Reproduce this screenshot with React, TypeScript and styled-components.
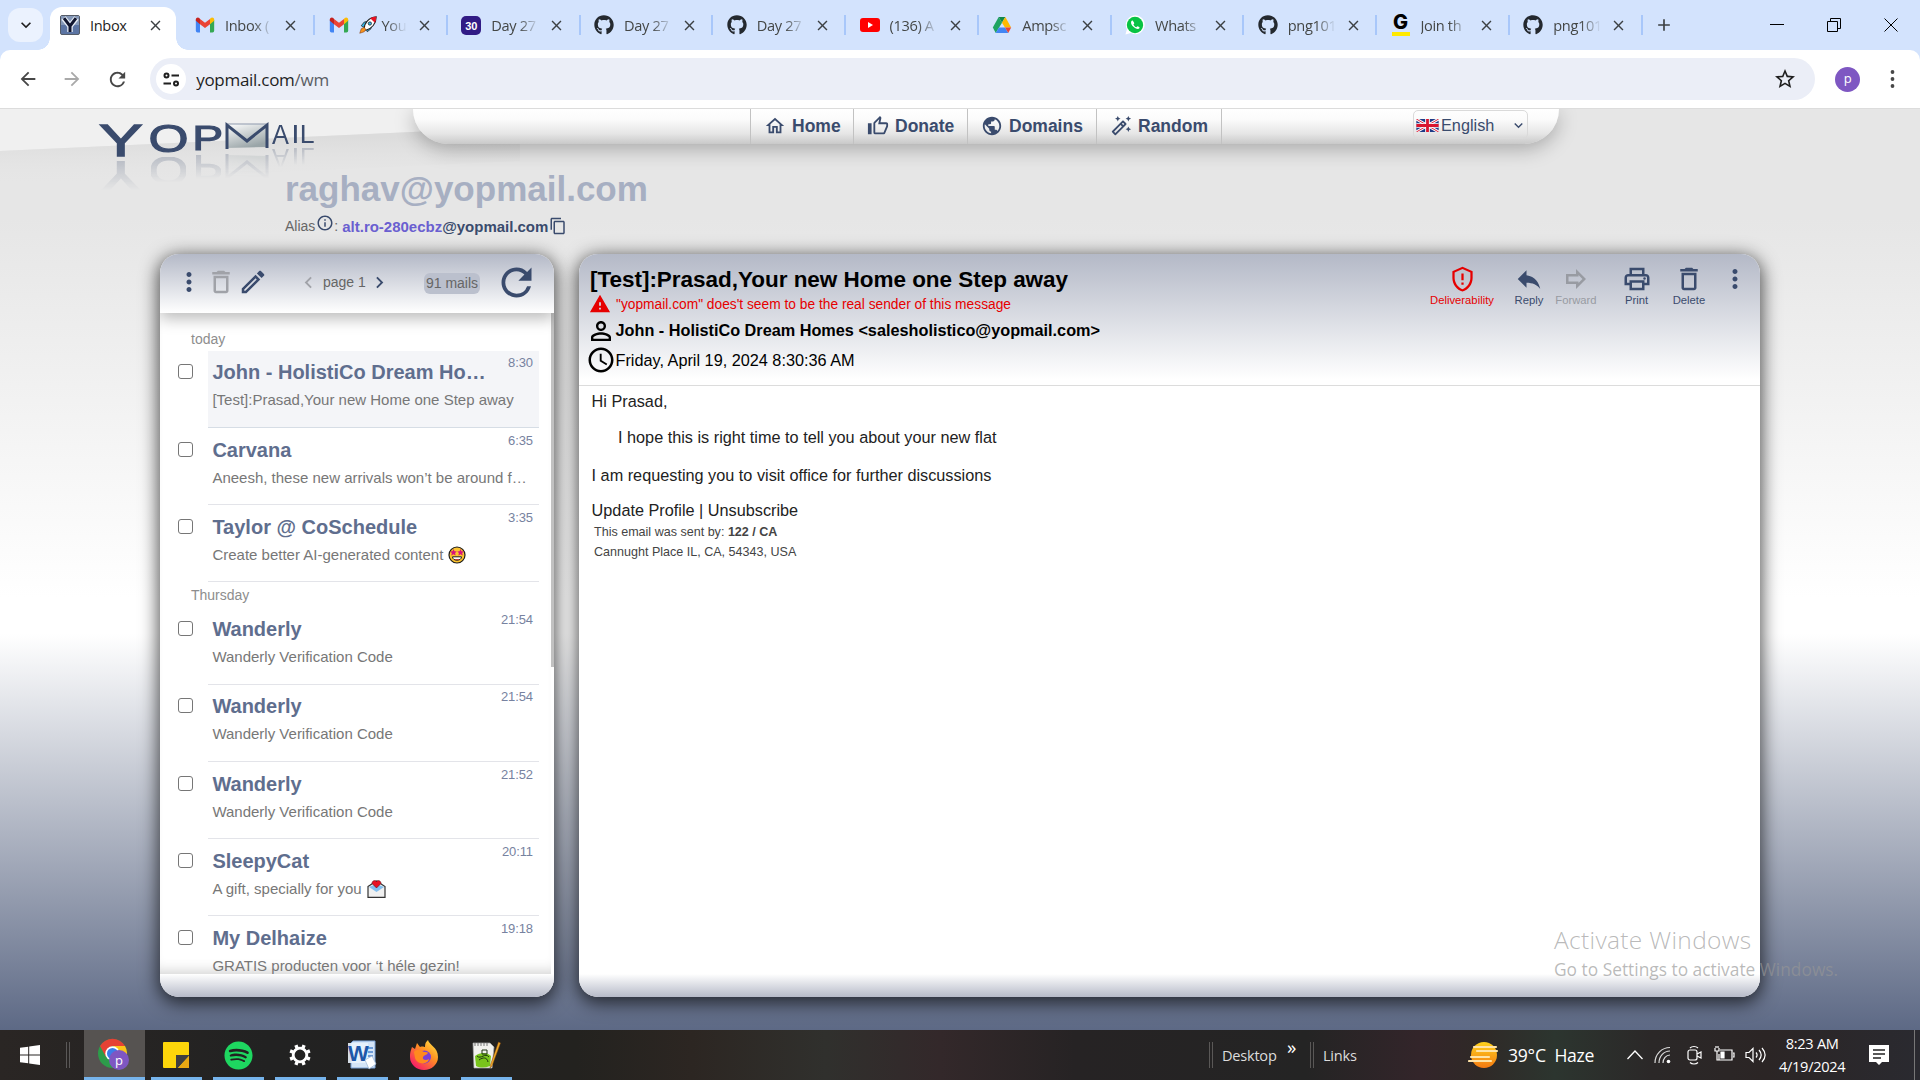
import React from 'react';
import styled, { createGlobalStyle } from 'styled-components';
import {
  MdArrowBack, MdArrowForward, MdRefresh, MdClose, MdAdd, MdStarOutline, MdMoreVert, MdDeleteOutline,
  MdOutlineEdit, MdChevronLeft, MdChevronRight, MdInfoOutline, MdContentCopy, MdPersonOutline,
  MdAccessTime, MdWarning, MdOutlinePrint, MdPublic, MdOutlineAutoFixHigh,
  MdKeyboardArrowDown,
} from 'react-icons/md';
import { FaGithub, FaSpotify } from 'react-icons/fa';

const navy = '#3a4b6d';
const ui = '"Open Sans", "Noto Sans", sans-serif';
const arial = '"Liberation Sans", Arial, sans-serif';

const Global = createGlobalStyle`
  html, body { margin: 0; padding: 0; overflow: hidden; }
  * { box-sizing: border-box; }
  svg { display: block; flex: none; }
`;

const Screen = styled.div`
  width: 1920px;
  height: 1080px;
  display: grid;
  grid-template-rows: 50px 58px 922px 50px;
  position: relative;
  overflow: hidden;
  background: #d3e3fd;
  font-family: ${arial};
`;

/* ---------- browser tabs ---------- */
const TabStrip = styled.div`
  display: flex;
  background: #d3e3fd;
  padding-left: 8px;
  font-family: ${ui};
`;
const TabSearch = styled.div`
  width: 35px;
  height: 34px;
  margin: 8px 7px 0 0;
  border-radius: 12px;
  background: #ebf2fe;
  display: grid;
  place-items: center;
  color: #1f1f1f;
`;
const Tab = styled.div<{ $active?: boolean; $first?: boolean }>`
  position: relative;
  display: flex;
  flex: none;
  align-items: center;
  width: ${p => (p.$active ? '126px' : p.$first ? '139px' : '132.75px')};
  height: ${p => (p.$active ? '43px' : '36px')};
  margin-top: 7px;
  padding: ${p => (p.$active ? '0 0 7px 10px' : p.$first ? '0 0 0 19px' : '0 0 0 13.5px')};
  background: ${p => (p.$active ? '#fff' : 'transparent')};
  border-radius: 12px 12px 0 0;
  &::before, &::after {
    content: '';
    display: ${p => (p.$active ? 'block' : 'none')};
    position: absolute;
    bottom: 0;
    width: 12px;
    height: 12px;
  }
  &::before { left: -12px; background: radial-gradient(circle at 0 0, transparent 11.5px, #fff 12px); }
  &::after { right: -12px; background: radial-gradient(circle at 100% 0, transparent 11.5px, #fff 12px); }
`;
const TabTitle = styled.span<{ $active?: boolean }>`
  display: flex;
  align-items: center;
  gap: 5px;
  width: 48px;
  margin-left: 10px;
  white-space: nowrap;
  font-size: 14.6px;
  letter-spacing: -0.35px;
  color: ${p => (p.$active ? '#1f1f1f' : '#444746')};
  mask-image: ${p => (p.$active ? 'none' : 'linear-gradient(90deg, #000 58%, transparent 100%)')};
`;
const TabClose = styled.span`
  margin-left: 9px;
  color: #3c4043;
`;
const TabDivider = styled.i`
  margin-left: auto;
  width: 2px;
  height: 20px;
  background: #a8c7fa;
`;
const NewTab = styled.div`
  width: 42px;
  display: grid;
  place-items: center;
  color: #3c4043;
`;
const WindowButtons = styled.div`
  margin-left: auto;
  display: flex;
  align-items: center;
  gap: 43px;
  padding-right: 22px;
`;

/* ---------- browser toolbar ---------- */
const Toolbar = styled.div`
  background: #fff;
  border-radius: 10px 10px 0 0;
  display: flex;
  align-items: center;
  padding-left: 17px;
  font-family: ${ui};
  color: #474747;
`;
const ToolButton = styled.span<{ $dim?: boolean }>`
  width: 44.4px;
  color: ${p => (p.$dim ? '#a9a9a9' : '#474747')};
`;
const UrlBar = styled.div`
  width: 1665px;
  height: 42px;
  border-radius: 21px;
  background: #ebeef7;
  display: flex;
  align-items: center;
  padding: 0 18px 0 6px;
  font-size: 17px;
  letter-spacing: -0.28px;
  color: #1f1f1f;
`;
const SiteInfo = styled.span`
  width: 30px;
  height: 30px;
  margin-right: 10px;
  border-radius: 50%;
  background: #fff;
  display: grid;
  place-items: center;
`;
const UrlPath = styled.span`color: #5a5d63;`;
const StarSlot = styled.span`margin-left: auto;`;
const Avatar = styled.span`
  width: 25px;
  height: 25px;
  margin: 0 30px 0 20px;
  border-radius: 50%;
  background: #7e57c2;
  color: #fff;
  font-size: 13px;
  line-height: 23px;
  text-align: center;
`;

/* ---------- page ---------- */
const Page = styled.main`
  position: relative;
  border-top: 1px solid #dcdcdc;
  background: linear-gradient(#e6e6e6 0, #e6e6e6 12%, #fff 53%, #fff 57%, #5d6985 100%);
`;
const Backdrop = styled.svg`
  position: absolute;
  left: 0;
  top: 0;
`;
const TopArea = styled.header`
  position: relative;
  height: 145px;
`;
const TopRow = styled.div`
  display: flex;
  align-items: flex-start;
  height: 60px;
`;
const Logo = styled.div`
  width: 413px;
  padding: 14px 0 0 101px;
  display: flex;
  align-items: flex-start;
`;
const LogoLetter = styled.svg<{ $gap: number; $top?: number }>`
  margin-left: ${p => p.$gap}px;
  margin-top: ${p => p.$top ?? 0}px;
  overflow: visible;
  -webkit-box-reflect: below 5px linear-gradient(transparent 5%, rgba(0, 0, 0, 0.24));
`;
const Nav = styled.nav`
  width: 1146px;
  height: 35px;
  display: flex;
  padding-left: 337px;
  border-radius: 0 0 35px 35px;
  background: linear-gradient(#fff 0, #fbfbfb 30%, #e6e6e6 70%, #c9c9c9 100%);
  box-shadow: 0 5px 20px rgba(0, 0, 0, 0.27);
  clip-path: inset(0 -40px -40px -40px);
`;
const NavItem = styled.a<{ $w: number; $last?: boolean }>`
  width: ${p => p.$w}px;
  display: flex;
  align-items: center;
  gap: 6px;
  padding: 0 0 1px 13px;
  border-left: 1px solid #c2c2c2;
  border-right: ${p => (p.$last ? '1px solid #c2c2c2' : 'none')};
  font-weight: bold;
  font-size: 17.5px;
  color: ${navy};
`;
const Language = styled.div`
  display: flex;
  align-items: center;
  width: 115px;
  height: 29px;
  margin: 1px 0 0 191px;
  padding: 1px 0 0 2px;
  border: 1px solid #dadada;
  border-radius: 5px;
  color: ${navy};
  font-size: 16.25px;
  gap: 2px;
  svg:last-child { margin-left: auto; }
`;
const Address = styled.h1`
  margin: 0 0 0 285px;
  font-size: 35px;
  line-height: 40px;
  color: #a7afc2;
`;
const AliasLine = styled.div`
  display: flex;
  align-items: center;
  margin-left: 285px;
  height: 34px;
  font-size: 14px;
  color: #666;
`;
const AliasIcon = styled.span<{ $up?: boolean }>`
  color: ${navy};
  margin: ${p => (p.$up ? '0 0 7px 1px' : '0 0 0 1px')};
`;
const Alias = styled.b`
  margin-left: 4px;
  font-size: 15px;
  letter-spacing: -0.01px;
  color: #6a5fd0;
  span { color: ${navy}; }
`;
const Panels = styled.div`
  display: flex;
  gap: 25px;
  padding-left: 160px;
`;
const Panel = styled.section<{ $w: number }>`
  width: ${p => p.$w}px;
  height: 743px;
  display: flex;
  flex-direction: column;
  border-radius: 19px;
  overflow: hidden;
  background: #fff;
  box-shadow: 0 4px 18px 2px rgba(0, 0, 0, 0.68);
`;
const PanelFoot = styled.div`
  height: 23px;
  flex: none;
  background: linear-gradient(#fff, #b6bac8);
`;
const ListHead = styled.div`
  position: relative;
  height: 59px;
  flex: none;
  display: flex;
  align-items: center;
  padding: 0 14px 3px 14px;
  background: linear-gradient(#b4b9c7, #fff);
  box-shadow: 0 6px 14px rgba(0, 0, 0, 0.26);
  color: ${navy};
  font-size: 14px;
`;
const HeadIcon = styled.span<{ $w: number; $dim?: boolean }>`
  width: ${p => p.$w}px;
  flex: none;
  color: ${p => (p.$dim ? '#a0a2a8' : navy)};
`;
const PageLabel = styled.span`
  width: 50px;
  flex: none;
  padding-left: 5px;
  color: #666;
  white-space: nowrap;
`;
const Count = styled.span`
  width: 56px;
  flex: none;
  height: 21px;
  margin: 3px 14px 0 33px;
  border-radius: 6px;
  background: #bbc0cd;
  color: #666;
  line-height: 21px;
  text-align: center;
  white-space: nowrap;
`;
const ListArea = styled.div`
  flex: 1;
  min-height: 0;
  overflow: hidden;
  display: flex;
`;
const ListBody = styled.div`
  width: 391px;
  padding-top: 12px;
  overflow: hidden;
  box-shadow: inset 0 -12px 14px -10px rgba(0, 0, 0, 0.2);
`;
const Thumb = styled.div`
  width: 3px;
  height: 354px;
  background: #c1c1c1;
`;
const Day = styled.div<{ $up?: boolean }>`
  height: 26px;
  padding: ${p => (p.$up ? 5 : 6)}px 0 0 31px;
  font-size: 14px;
  line-height: 16px;
  color: #8d8d8d;
`;
const MailRow = styled.div`
  display: flex;
  height: 77px;
  padding-left: 18px;
`;
const Box = styled.span<{ $drop: number }>`
  width: 15px;
  height: 15px;
  margin: ${p => 13 + p.$drop}px 15px 0 0;
  border: 1px solid #767676;
  border-radius: 3px;
  background: #fff;
`;
const MailCard = styled.div<{ $on?: boolean; $drop: number }>`
  width: 331px;
  padding: ${p => 8 + p.$drop}px 6px 0 4.4px;
  border-bottom: 1px solid ${p => (p.$on ? '#d6dde5' : '#e3e4e9')};
  background: ${p => (p.$on ? '#f4f5f8' : 'transparent')};
  display: grid;
  grid-template-columns: 276px 1fr;
  align-content: start;
`;
const From = styled.div`
  font-weight: bold;
  font-size: 20px;
  line-height: 26px;
  color: #5f6e8e;
  overflow: hidden;
  text-overflow: ellipsis;
  white-space: nowrap;
`;
const Time = styled.div`
  margin-top: -4px;
  font-size: 13px;
  line-height: 15px;
  letter-spacing: -0.1px;
  text-align: right;
  color: #7782a0;
`;
const Snippet = styled.div`
  grid-column: 1 / 3;
  display: flex;
  align-items: center;
  gap: 5px;
  height: 18px;
  margin-top: 6px;
  font-size: 15px;
  line-height: 18px;
  color: #777;
  white-space: nowrap;
`;

/* ---------- message ---------- */
const MsgHead = styled.div`
  height: 132px;
  flex: none;
  display: flex;
  justify-content: space-between;
  background: linear-gradient(#b4b9c7, #fff 96%);
  border-bottom: 1px solid #dcdcdc;
`;
const MsgInfo = styled.div`
  padding: 12px 0 0 10px;
  color: #000;
`;
const Subject = styled.h2`
  margin: 0 0 0 1px;
  font-size: 22.5px;
  line-height: 28px;
  letter-spacing: -0.03px;
`;
const InfoRow = styled.div<{ $h: number; $size: number; $color?: string; $bold?: boolean }>`
  display: flex;
  align-items: center;
  height: ${p => p.$h}px;
  font-size: ${p => p.$size}px;
  font-weight: ${p => (p.$bold ? 'bold' : 'normal')};
  color: ${p => p.$color ?? '#000'};
  white-space: nowrap;
`;
const InfoIcon = styled.span`
  width: 26.5px;
  display: flex;
  svg { margin-left: -3.5px; }
`;
const WarnIcon = styled.span`width: 27px;`;
const Actions = styled.div`
  display: flex;
  align-items: flex-start;
  padding: 10px 9px 0 0;
`;
const Action = styled.div<{ $w: number; $after?: number; $color?: string }>`
  width: ${p => p.$w}px;
  margin-right: ${p => p.$after ?? 0}px;
  display: flex;
  flex-direction: column;
  align-items: center;
  color: ${p => p.$color ?? navy};
  font-size: 11.25px;
  line-height: 13px;
  svg { height: 30px; }
`;
const Body = styled.div`
  flex: 1;
  padding: 6px 0 0 12.6px;
  color: #222;
  font-size: 16.25px;
`;
const Line = styled.p<{ $h: number; $indent?: number }>`
  margin: 0;
  height: ${p => p.$h}px;
  padding-left: ${p => p.$indent ?? 0}px;
  line-height: 19px;
`;
const Small = styled.p`
  margin: 0;
  padding-left: 2.4px;
  font-size: 12.55px;
  line-height: 19.5px;
  color: #444;
`;

/* ---------- watermark ---------- */
const Watermark = styled.div`
  position: absolute;
  left: 1554px;
  top: 922px;
  font-family: ${ui};
  color: rgba(150, 150, 150, 0.66);
  white-space: nowrap;
`;
const WmTitle = styled.div`
  font-size: 24.5px;
  font-weight: 300;
  line-height: 36px;
  letter-spacing: 0.33px;
`;
const WmText = styled.div`
  font-size: 17.35px;
  line-height: 23px;
`;

/* ---------- taskbar ---------- */
const Taskbar = styled.footer`
  display: flex;
  align-items: center;
  background: linear-gradient(90deg, #2a2624 0, #222 14%, #23221f 30%, #2c2622 36%, #30302d 43%, #33282a 49%, #262324 56%, #242424 68%, #33252a 74%, #2f2927 77%, #2c352f 81%, #2b2828 86%, #2b2525 92%, #2a2a30 100%);
  color: #fff;
  font-family: ${ui};
`;
const StartSlot = styled.div`padding: 0 26px 0 20px;`;
const Grip = styled.i`
  width: 4px;
  height: 26px;
  border: 1px solid #5a5857;
  border-width: 0 1px;
`;
const Apps = styled.div`
  display: flex;
  height: 50px;
  width: 434px;
  margin-left: 14px;
`;
const AppSlot = styled.div<{ $on?: boolean }>`
  width: ${p => (p.$on ? 61 : 51)}px;
  margin-right: ${p => (p.$on ? 6 : 11)}px;
  height: 50px;
  flex: none;
  display: grid;
  place-items: center;
  background: ${p => (p.$on ? '#565351' : 'transparent')};
  border-bottom: 3px solid #76b4ec;
  padding: 3px 1px 0 0;
`;
const Deskbar = styled.div`
  display: flex;
  align-items: center;
  margin-left: 691px;
  font-size: 14.6px;
  letter-spacing: -0.25px;
  color: #dcdcdc;
`;
const DeskText = styled.span<{ $w: number }>`
  width: ${p => p.$w}px;
  padding-left: 9px;
`;
const More = styled.span`
  width: 23px;
  height: 46px;
  font-size: 19px;
  line-height: 30px;
  color: #fff;
`;
const Weather = styled.div`
  display: flex;
  align-items: center;
  width: 158px;
  margin-left: 100px;
  font-size: 17.6px;
  letter-spacing: -0.25px;
  gap: 9px;
  white-space: pre;
`;
const Tray = styled.div`
  display: flex;
  align-items: center;
  gap: 9.3px;
`;
const Clock = styled.div`
  width: 80px;
  margin-left: 4px;
  text-align: center;
  font-size: 14.6px;
  line-height: 23px;
  letter-spacing: -0.3px;
  white-space: nowrap;
`;
const Notice = styled.div`
  margin-left: 17px;
  width: 46px;
  height: 50px;
  display: flex;
  align-items: center;
  border-right: 1px solid #777;
`;

/* ---------- drawings ---------- */
const Gmail = () => (
  <svg width="20" height="20" viewBox="0 0 24 24">
    <path d="M1 6v13a2 2 0 0 0 2 2h3V10z" fill="#4285f4" />
    <path d="M18 10v11h3a2 2 0 0 0 2-2V6z" fill="#34a853" />
    <path d="M18 4.8V11l5-4V5.5c0-2.4-2.600-3.200-4.200-1.800z" fill="#fbbc04" />
    <path d="M6 11V4.800l6 4.600 6-4.600V11l-6 4.600z" fill="#ea4335" />
    <path d="M1 5.500V7l5 4V4.800l-.8-1.100C3.600 2.300 1 3.100 1 5.500z" fill="#c5221f" />
  </svg>
);
const Rocket = () => (
  <svg width="18" height="20" viewBox="0 0 24 24">
    <path d="M3 13l4-5 5-1-6 8zM11 21l5-4 1-6-7 7z" fill="#35b5e8" stroke="#222" strokeWidth="1" />
    <path d="M7 17C7 9 13 2 23 1c0 9-6 16-14 18z" fill="#fff" stroke="#222" strokeWidth="1.400" />
    <path d="M15 3c3-1.500 5-1.900 8-2 0 3-.5 5-1.900 8z" fill="#e81224" />
    <circle cx="14.500" cy="10" r="2.200" fill="#35b5e8" stroke="#222" />
    <path d="M7 15l-4 2-2 6 6-2 2-3z" fill="#f7941d" stroke="#7a3010" strokeWidth=".7" />
  </svg>
);
const YFav = () => (
  <svg width="20" height="20" viewBox="0 0 20 20">
    <rect x=".5" y=".5" width="19" height="19" rx="1.500" fill="#5b74a3" stroke="#555c68" />
    <rect x="1" y="1" width="18" height="9" fill="#8598b8" />
    <path d="M3.500 3l6.500 8v6M16.500 3L10 11" fill="none" stroke="#e6edf6" strokeWidth="5.500" />
    <path d="M4 3.200l6 7.800v6M16 3.200L10 11" fill="none" stroke="#10152e" strokeWidth="3" />
  </svg>
);
const Fav30 = styled.span`
  width: 20px;
  height: 19px;
  border-radius: 5px;
  background: #311b85;
  color: #fff;
  font: bold 11px/20px ${arial};
  text-align: center;
  flex: none;
`;
const YouTube = () => (
  <svg width="20" height="20" viewBox="0 0 20 20"><rect y="3" width="20" height="14" rx="3" fill="#f00" /><path d="M8 7v6l5-3z" fill="#fff" /></svg>
);
const Drive = () => (
  <svg width="20" height="20" viewBox="0 0 24 24">
    <path d="M8 2.500L1 15l3.500 6.500L12 9.300z" fill="#1ea362" />
    <path d="M8 2.500h8l-4 6.800z" fill="#11874a" />
    <path d="M16 2.500L23 15h-7.500L12 9.300z" fill="#ffba00" />
    <path d="M8.300 15h7.400l3.800 6.500h-15z" fill="#4285f4" />
    <path d="M15.700 15H23l-3.500 6.500z" fill="#ea4335" />
  </svg>
);
const Whats = () => (
  <svg width="20" height="20" viewBox="0 0 24 24">
    <path d="M.5 23.500L2.300 17A11.300 11.300 0 1 1 7 21.700z" fill="#fff" />
    <circle cx="12" cy="12" r="9.800" fill="#08c343" />
    <path d="M8.500 6.500c-2 1.200-1.500 4.500 1.300 7.300s6.300 4.100 7.700 1.700c.3-.7-2.600-2.300-3-1.800l-1 1c-1-.3-3-2.200-3.400-3.400l1-1c.4-.5-1.500-4.200-2.600-3.800z" fill="#fff" />
  </svg>
);
const GFav = styled.span`
  width: 18px;
  height: 22px;
  margin: 0 1px;
  flex: none;
  display: flex;
  justify-content: center;
  font: 800 20px/17px Inter, sans-serif;
  color: #000;
  border-bottom: 4px solid #ffe900;
`;
const Git = () => <FaGithub size={20} color="#24292f" />;
const Home = () => (
  <svg width="22" height="22" viewBox="0 0 24 24" fill="currentColor"><path d="M12 5.690L17 10.190V18H15V12H9V18H7V10.190L12 5.690M12 3L2 12H5V20H11V14H13V20H19V12H22L12 3Z" /></svg>
);
const Thumbs = () => (
  <svg width="22" height="22" viewBox="0 0 24 24" fill="currentColor"><path d="M5,9V21H1V9H5M9,21A2,2 0 0,1 7,19V9C7,8.450 7.220,7.950 7.590,7.590L14.170,1L15.230,2.060C15.500,2.330 15.670,2.700 15.670,3.110L15.640,3.430L14.690,8H21C22.110,8 23,8.900 23,10V12C23,12.260 22.950,12.500 22.860,12.730L19.840,19.780C19.540,20.500 18.830,21 18,21H9M9,19H18.030L21,12V10H12.210L13.340,4.680L9,9.030V19Z" /></svg>
);
const Flag = () => (
  <svg width="23" height="13" viewBox="0 0 24 14">
    <rect width="24" height="14" fill="#1f3a86" />
    <path d="M0 0l24 14M24 0L0 14" stroke="#fff" strokeWidth="3" />
    <path d="M0 0l24 14M24 0L0 14" stroke="#d8152f" strokeWidth="1" />
    <path d="M12 0v14M0 7h24" stroke="#fff" strokeWidth="5" />
    <path d="M12 0v14M0 7h24" stroke="#d8152f" strokeWidth="3" />
  </svg>
);
const Shield = () => (
  <svg width="27" height="27" viewBox="0 0 24 24" fill="currentColor"><path d="M21,11C21,16.550 17.160,21.740 12,23C6.840,21.740 3,16.550 3,11V5L12,1L21,5V11M12,21C15.750,20 19,15.540 19,11.220V6.300L12,3.180L5,6.300V11.220C5,15.540 8.250,20 12,21M11,7H13V13H11V7M11,15H13V17H11V15Z" /></svg>
);
const Reply = () => (
  <svg width="30" height="30" viewBox="0 0 24 24" fill="currentColor"><path d="M10,9V5L3,12L10,19V14.900C15,14.900 18.500,16.500 21,20C20,15 17,10 10,9Z" /></svg>
);
const Forward = () => (
  <svg width="30" height="30" viewBox="0 0 24 24" fill="currentColor"><path d="M14 8.830L17.170 12 14 15.170V14H6v-4h8V8.830M12 4v4H4v8h8v4l8-8-8-8z" /></svg>
);
const StarStruck = () => (
  <svg width="18" height="18" viewBox="0 0 18 18">
    <circle cx="9" cy="9" r="8" fill="#fcc42f" stroke="#1b1b1b" strokeWidth="1.200" />
    <path d="M5.500 3l1 2.200 2.300.2-1.700 1.600.5 2.400-2.100-1.200-2.200 1.200.5-2.400L2 5.400l2.500-.2zM12.500 3l1 2.200 2.500.2-1.800 1.600.5 2.400-2.200-1.200-2.100 1.200.5-2.400-1.700-1.600 2.300-.2z" fill="#d8127d" />
    <path d="M4.500 10.800h9c0 4.600-9 4.600-9 0z" fill="#fff" stroke="#1b1b1b" />
    <path d="M7 13.600h4" stroke="#c4332b" />
  </svg>
);
const LoveLetter = () => (
  <svg width="19" height="18" viewBox="0 0 19 18">
    <path d="M1 6.500L9.500 1 18 6.500v10.800H1z" fill="#f0f0f0" stroke="#333" strokeWidth="1.200" />
    <path d="M2 7l7.500-3L17 7l-7.500 5z" fill="#83bfef" />
    <path d="M9.500 8L5 3.500C5 0 9 0 9.500 1.700 10 0 14 0 14 3.500z" fill="#e81224" stroke="#4a1015" strokeWidth=".5" />
  </svg>
);
const Chrome = () => (
  <svg width="34" height="34" viewBox="0 0 34 34">
    <circle cx="15.500" cy="15.500" r="14.500" fill="#2d9c4a" />
    <path d="M3 8a14.500 14.500 0 0 1 25 0H15l-6 11z" fill="#e64134" />
    <path d="M28 8a14.500 14.500 0 0 1-12 22l6-12L16 8z" fill="#fcc419" />
    <circle cx="15.500" cy="15.500" r="7.200" fill="#fff" />
    <circle cx="15.500" cy="15.500" r="5.500" fill="#3b7de9" />
    <circle cx="22" cy="22" r="10" fill="#7e57c2" />
    <text x="22" y="26.500" textAnchor="middle" fontFamily="Open Sans" fontSize="13" fill="#fff">p</text>
  </svg>
);
const Notes = () => (
  <svg width="28" height="28" viewBox="0 0 28 28"><rect x="1" y="1" width="26" height="26" rx="1" fill="#fdd60a" /><path d="M14 14h13v1L16 27h-2z" fill="#3f3f3f" /><path d="M27 15v12H16z" fill="#e9a813" /></svg>
);
const Gear = () => (
  <svg width="24" height="24" viewBox="0 0 24 24" fill="none" stroke="#fff">
    <circle cx="12" cy="12" r="6.800" strokeWidth="2.800" />
    <path d="M18.900 14.900l3 1.200M14.900 18.900l1.200 3M9.100 18.900l-1.200 3M5.100 14.900l-3 1.200M5.100 9.100l-3-1.200M9.100 5.100l-1.200-3M14.900 5.100l1.200-3M18.900 9.100l3-1.200" strokeWidth="3.400" />
  </svg>
);
const Word = () => (
  <svg width="30" height="30" viewBox="0 0 30 30">
    <path d="M6 1h22v27H4V3z" fill="#d5e5f7" stroke="#7aa2d6" />
    <path d="M17 8h9M17 12h9M17 16h9" stroke="#6c9bd7" strokeWidth="2" />
    <rect x="1" y="3" width="20" height="20" fill="#e9f2fb" opacity=".9" />
    <text x="11.500" y="21" textAnchor="middle" fontFamily="Liberation Sans" fontWeight="bold" fontSize="22" fill="#1d57a8">W</text>
    <path d="M18 20l7-4 4 8-7 5z" fill="#fff" stroke="#9bb4d4" strokeWidth=".7" />
  </svg>
);
const Firefox = () => (
  <svg width="30" height="30" viewBox="0 0 30 30">
    <defs><linearGradient id="fx" x1="1" y1="0" x2=".2" y2="1"><stop offset="0" stopColor="#fff04a" /><stop offset=".45" stopColor="#ff9122" /><stop offset="1" stopColor="#f5156c" /></linearGradient></defs>
    <path d="M3 7l3 2 2-6 3 4c3-1 4 0 5 0 0-4 1-5 3-7 1 5 10 7 10 17A14 13 0 0 1 1 17C1 12 2 10 3 7z" fill="url(#fx)" />
    <circle cx="15.500" cy="17" r="6.500" fill="#7a3fd6" />
    <path d="M5 12c2-3 7-2 10 0 2 0 4 0 4 1-1 2-4 2-5 4-1 3 3 4 6 2-1 6-12 6-14-1z" fill="#ff8a1e" />
  </svg>
);
const Npp = () => (
  <svg width="30" height="30" viewBox="0 0 30 30">
    <path d="M2 3h17l4 4-2 21H3z" fill="#f2f2ee" stroke="#aaa" strokeWidth=".7" />
    <path d="M4 3v3M7 3v3M10 3v3M13 3v3M16 3v3" stroke="#777" />
    <path d="M4 16c5-4 12-4 16 0l-1 10c-5 2-10 2-14 0z" fill="#79c51c" />
    <path d="M6 16c4 4 8-4 12 1M8 20c4-3 8-3 9 2M11 10h5v4h-5z" fill="none" stroke="#1e3510" strokeWidth="1" />
    <path d="M27.500 2l2 1L21 26l-2 2 .4-3z" fill="#f0a928" stroke="#8a4c10" strokeWidth=".5" />
  </svg>
);
const Haze = () => (
  <svg width="31" height="28" viewBox="0 0 31 28">
    <defs><linearGradient id="hz" x1="0" y1="0" x2="0" y2="1"><stop offset="0" stopColor="#ffd21c" /><stop offset="1" stopColor="#f47a12" /></linearGradient></defs>
    <circle cx="16" cy="14" r="13" fill="url(#hz)" />
    <path d="M6 6h22M9 10h20M3 16h18M1 20h22" stroke="#ffe3a6" strokeWidth="2.200" strokeLinecap="round" />
  </svg>
);

const tabs = [
  { icon: <Gmail />, title: 'Inbox (' },
  { icon: <Gmail />, title: <><Rocket />You</> },
  { icon: <Fav30>30</Fav30>, title: 'Day 27' },
  { icon: <Git />, title: 'Day 27' },
  { icon: <Git />, title: 'Day 27' },
  { icon: <YouTube />, title: '(136) A' },
  { icon: <Drive />, title: 'Ampsc' },
  { icon: <Whats />, title: 'Whats' },
  { icon: <Git />, title: 'png101' },
  { icon: <GFav>G</GFav>, title: 'Join th' },
  { icon: <Git />, title: 'png101' },
];

type Mail = { from: string; text: string; time: string; on?: boolean; drop?: number; icon?: React.ReactNode };
const groups: { day: string; mails: Mail[] }[] = [
  {
    day: 'today',
    mails: [
      { from: 'John - HolistiCo Dream Homes', text: '[Test]:Prasad,Your new Home one Step away', time: '8:30', on: true },
      { from: 'Carvana', text: 'Aneesh, these new arrivals won’t be around f…', time: '6:35', drop: 1 },
      { from: 'Taylor @ CoSchedule', text: 'Create better AI-generated content', time: '3:35', icon: <StarStruck />, drop: 1 },
    ],
  },
  {
    day: 'Thursday',
    mails: [
      { from: 'Wanderly', text: 'Wanderly Verification Code', time: '21:54' },
      { from: 'Wanderly', text: 'Wanderly Verification Code', time: '21:54' },
      { from: 'Wanderly', text: 'Wanderly Verification Code', time: '21:52', drop: 1 },
      { from: 'SleepyCat', text: 'A gift, specially for you', time: '20:11', icon: <LoveLetter />, drop: 1 },
      { from: 'My Delhaize', text: 'GRATIS producten voor ‘t héle gezin!', time: '19:18', drop: 1 },
    ],
  },
];

const logoText = [
  { c: 'Y', w: 40, h: 31, gap: 0, top: 2 },
  { c: 'O', w: 35, h: 27, gap: 10, top: 2 },
  { c: 'P', w: 25, h: 25, gap: 10, top: 2 },
];
const logoTail = [
  { c: 'A', w: 17, h: 19, gap: 3, top: 2 },
  { c: 'I', w: 3, h: 18, gap: 5, top: 2 },
  { c: 'L', w: 12, h: 18, gap: 5, top: 2 },
];
/* ink box of each capital in Liberation Sans, in 1/100 em: left, width */
const ink: Record<string, [number, number]> = { Y: [3, 61], O: [5, 68], P: [8, 54], A: [0, 67], I: [9, 10], L: [8, 45] };
const Letter = ({ c, w, h, gap, top, thin }: { c: string; w: number; h: number; gap: number; top: number; thin?: boolean }) => (
  <LogoLetter width={w} height={h} $gap={gap} $top={top} viewBox={`${ink[c][0]} 0 ${ink[c][1]} 70`} preserveAspectRatio="none">
    <text y="69" fontFamily="Liberation Sans" fontSize="100" fill={navy} stroke={navy} strokeWidth={thin ? 0 : 3}>{c}</text>
  </LogoLetter>
);

export default function App() {
  return (
    <>
      <Global />
      <Screen>
        <TabStrip>
          <TabSearch><MdKeyboardArrowDown size={20} /></TabSearch>
          <Tab $active>
            <YFav /><TabTitle $active>Inbox</TabTitle><TabClose><MdClose size={17} /></TabClose>
          </Tab>
          {tabs.map((t, i) => (
            <Tab key={i} $first={i === 0}>
              {t.icon}<TabTitle>{t.title}</TabTitle><TabClose><MdClose size={17} /></TabClose><TabDivider />
            </Tab>
          ))}
          <NewTab><MdAdd size={20} /></NewTab>
          <WindowButtons>
            <svg width="14" height="14" viewBox="0 0 14 14"><path d="M0 6.500h14" stroke="#000" /></svg>
            <svg width="14" height="14" viewBox="0 0 14 14"><path d="M.5 3.500h10v10H.5zM3.500 3V.5h10v10H11" fill="none" stroke="#000" /></svg>
            <svg width="14" height="14" viewBox="0 0 14 14"><path d="M.5.5l13 13M13.500.5l-13 13" stroke="#000" /></svg>
          </WindowButtons>
        </TabStrip>

        <Toolbar>
          <ToolButton><MdArrowBack size={22} /></ToolButton>
          <ToolButton $dim><MdArrowForward size={22} /></ToolButton>
          <ToolButton><MdRefresh size={23} /></ToolButton>
          <UrlBar>
            <SiteInfo>
              <svg width="17" height="15" viewBox="0 0 17 15" fill="none" stroke="#1f1f1f" strokeWidth="2"><circle cx="3.500" cy="3.500" r="2" /><path d="M8.500 3.500H16M.5 11.500H8" /><circle cx="13" cy="11.500" r="2" /></svg>
            </SiteInfo>
            <span>yopmail.com<UrlPath>/wm</UrlPath></span>
            <StarSlot><MdStarOutline size={24} /></StarSlot>
          </UrlBar>
          <Avatar>p</Avatar>
          <svg width="5" height="20" viewBox="0 0 5 20" fill="#474747"><circle cx="2.500" cy="3" r="1.900" /><circle cx="2.500" cy="10" r="1.900" /><circle cx="2.500" cy="17" r="1.900" /></svg>
        </Toolbar>

        <Page>
          <Backdrop width="520" height="90" viewBox="0 0 520 90">
            <defs>
              <linearGradient id="slope" x1="0" y1="0" x2=".04" y2="1"><stop offset="0.200" stopColor="#dcdcdc" /><stop offset="1" stopColor="#e6e6e6" stopOpacity="0" /></linearGradient>
            </defs>
            <path d="M0 0H520V18L0 42z" fill="#f0f0f0" />
            <path d="M0 42L520 18V52L0 76z" fill="url(#slope)" />
          </Backdrop>
          <TopArea>
            <TopRow>
              <Logo>
                {logoText.map(l => <Letter key={l.c} {...l} />)}
                <LogoLetter width="44" height="26" viewBox="0 0 44 26" $gap={4}>
                  <defs><linearGradient id="env" x1="0" y1="0" x2=".5" y2="1"><stop offset="0" stopColor="#fff" /><stop offset="1" stopColor="#9aa5a8" /></linearGradient></defs>
                  <path d="M1 1h42v23L1 25z" fill="url(#env)" />
                  <path d="M1 1h42" stroke="#8e99ad" strokeWidth="1" />
                  <path d="M2 26V2l20 16L42 2v23" fill="none" stroke={navy} strokeWidth="3" />
                </LogoLetter>
                {logoTail.map(l => <Letter key={l.c} {...l} thin />)}
              </Logo>
              <Nav>
                <NavItem $w={103}><Home />Home</NavItem>
                <NavItem $w={114}><Thumbs />Donate</NavItem>
                <NavItem $w={129}><MdPublic size={22} />Domains</NavItem>
                <NavItem $w={126} $last><MdOutlineAutoFixHigh size={22} />Random</NavItem>
                <Language><Flag />English<MdKeyboardArrowDown size={17} /></Language>
              </Nav>
            </TopRow>
            <Address>raghav@yopmail.com</Address>
            <AliasLine>
              Alias<AliasIcon $up><MdInfoOutline size={18} /></AliasIcon>:
              <Alias>alt.ro-280ecbz<span>@yopmail.com</span></Alias>
              <AliasIcon><MdContentCopy size={18} /></AliasIcon>
            </AliasLine>
          </TopArea>

          <Panels>
            <Panel $w={394}>
              <ListHead>
                <HeadIcon $w={32}><MdMoreVert size={30} /></HeadIcon>
                <HeadIcon $w={32} $dim><MdDeleteOutline size={30} /></HeadIcon>
                <HeadIcon $w={59}><MdOutlineEdit size={30} /></HeadIcon>
                <HeadIcon $w={21} $dim><MdChevronLeft size={23} /></HeadIcon>
                <PageLabel>page 1</PageLabel>
                <HeadIcon $w={23}><MdChevronRight size={23} /></HeadIcon>
                <Count>91 mails</Count>
                <MdRefresh size={45} />
              </ListHead>
              <ListArea>
                <ListBody>
                  {groups.map((g, gi) => (
                    <React.Fragment key={g.day}>
                      <Day $up={gi > 0}>{g.day}</Day>
                      {g.mails.map((m, i) => (
                        <MailRow key={i}>
                          <Box $drop={m.drop ?? 0} />
                          <MailCard $on={m.on} $drop={m.drop ?? 0}>
                            <From>{m.from}</From>
                            <Time>{m.time}</Time>
                            <Snippet>{m.text}{m.icon}</Snippet>
                          </MailCard>
                        </MailRow>
                      ))}
                    </React.Fragment>
                  ))}
                </ListBody>
                <Thumb />
              </ListArea>
              <PanelFoot />
            </Panel>

            <Panel $w={1181}>
              <MsgHead>
                <MsgInfo>
                  <Subject>[Test]:Prasad,Your new Home one Step away</Subject>
                  <InfoRow $h={20} $size={13.78} $color="#e60000">
                    <WarnIcon><MdWarning size={22} /></WarnIcon>"yopmail.com" does't seem to be the real sender of this message
                  </InfoRow>
                  <InfoRow $h={33} $size={16.25} $bold>
                    <InfoIcon><MdPersonOutline size={30} /></InfoIcon>John - HolistiCo Dream Homes &lt;salesholistico@yopmail.com&gt;
                  </InfoRow>
                  <InfoRow $h={26} $size={16.25}>
                    <InfoIcon><MdAccessTime size={30} /></InfoIcon>Friday, April 19, 2024 8:30:36 AM
                  </InfoRow>
                </MsgInfo>
                <Actions>
                  <Action $w={66} $after={9} $color="#e60000"><Shield />Deliverability</Action>
                  <Action $w={50}><Reply />Reply</Action>
                  <Action $w={44} $after={16} $color="#989ba2"><Forward />Forward</Action>
                  <Action $w={45}><MdOutlinePrint size={30} />Print</Action>
                  <Action $w={60}><MdDeleteOutline size={30} />Delete</Action>
                  <Action $w={32}><MdMoreVert size={30} /></Action>
                </Actions>
              </MsgHead>
              <Body>
                <Line $h={36}>Hi Prasad,</Line>
                <Line $h={38} $indent={26.4}>I hope this is right time to tell you about your new flat</Line>
                <Line $h={35}>I am requesting you to visit office for further discussions</Line>
                <Line $h={22}>Update Profile | Unsubscribe</Line>
                <Small>This email was sent by: <b>122 / CA</b></Small>
                <Small>Cannught Place IL, CA, 54343, USA</Small>
              </Body>
              <PanelFoot />
            </Panel>
          </Panels>
        </Page>

        <Taskbar>
          <StartSlot>
            <svg width="20" height="20" viewBox="0 0 20 20" fill="#fff"><path d="M0 2.800l8.200-1.100v7.700H0zM9.200 1.500L20 0v9.400H9.200zM0 10.500h8.200v7.800L0 17.200zM9.200 10.500H20V20L9.200 18.500z" /></svg>
          </StartSlot>
          <Grip />
          <Apps>
            <AppSlot $on><Chrome /></AppSlot>
            <AppSlot><Notes /></AppSlot>
            <AppSlot><FaSpotify size={29} color="#1ed760" /></AppSlot>
            <AppSlot><Gear /></AppSlot>
            <AppSlot><Word /></AppSlot>
            <AppSlot><Firefox /></AppSlot>
            <AppSlot><Npp /></AppSlot>
          </Apps>
          <Deskbar>
            <Grip /><DeskText $w={74}>Desktop</DeskText><More>»</More><Grip /><DeskText $w={54}>Links</DeskText>
          </Deskbar>
          <Weather><Haze />39°C  Haze</Weather>
          <Tray>
            <svg width="18" height="18" viewBox="0 0 18 18" fill="none" stroke="#fff" strokeWidth="1.300"><path d="M1.500 13L9 5l7.500 8" /></svg>
            <svg width="22" height="20" viewBox="0 0 22 20" fill="none" stroke="#ddd" strokeWidth="1.200"><path d="M2 18C2 9 9 2.500 17 2.500M6 18c0-7 5-12 11-12M10 18c0-4.500 3-8 7-8" /><circle cx="15.500" cy="16.500" r="1.800" fill="#fff" stroke="none" /></svg>
            <svg width="20" height="20" viewBox="0 0 20 20" fill="none" stroke="#fff" strokeWidth="1.200"><rect x="3" y="5" width="9" height="10" rx="2" /><path d="M12 9l4-2v6l-4-2M5 3c2-2 6-2 8 0M5 17.500c2 2 6 2 8 0" /></svg>
            <svg width="22" height="20" viewBox="0 0 22 20" fill="none" stroke="#fff" strokeWidth="1.200"><path d="M6 5h12v10H5V9M19 8h1v4h-1M1 3v3h4V3M3 6v9h2M2 1v2M4 1v2" /><path d="M7 7h3v6H7z" fill="#fff" /></svg>
            <svg width="23" height="20" viewBox="0 0 23 20" fill="none" stroke="#fff" strokeWidth="1.200"><path d="M1 7.500h3l4-4v13l-4-4H1zM11 7.500c1.300 1.500 1.300 3.500 0 5M14 5c2.600 3 2.600 7 0 10M17 3c4 4.500 4 9.500 0 14" /></svg>
          </Tray>
          <Clock>8:23 AM<br />4/19/2024</Clock>
          <Notice>
            <svg width="20" height="20" viewBox="0 0 20 20"><path d="M0 0h20v17h-7l-3 3-3-3H0z" fill="#fff" /><path d="M4 5h12M4 9h12M4 13h8" stroke="#222" strokeWidth="1.300" /></svg>
          </Notice>
        </Taskbar>

        <Watermark>
          <WmTitle>Activate Windows</WmTitle>
          <WmText>Go to Settings to activate Windows.</WmText>
        </Watermark>
      </Screen>
    </>
  );
}
